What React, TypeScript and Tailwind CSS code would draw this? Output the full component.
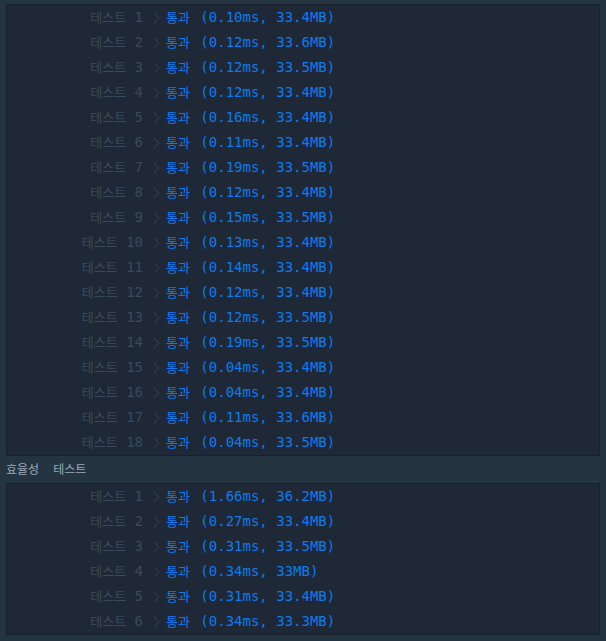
import { FC } from 'react';

type Row = { no: number; time: string; mem: string };

const accuracy: Row[] = [
  { no: 1, time: '0.10ms', mem: '33.4MB' },
  { no: 2, time: '0.12ms', mem: '33.6MB' },
  { no: 3, time: '0.12ms', mem: '33.5MB' },
  { no: 4, time: '0.12ms', mem: '33.4MB' },
  { no: 5, time: '0.16ms', mem: '33.4MB' },
  { no: 6, time: '0.11ms', mem: '33.4MB' },
  { no: 7, time: '0.19ms', mem: '33.5MB' },
  { no: 8, time: '0.12ms', mem: '33.4MB' },
  { no: 9, time: '0.15ms', mem: '33.5MB' },
  { no: 10, time: '0.13ms', mem: '33.4MB' },
  { no: 11, time: '0.14ms', mem: '33.4MB' },
  { no: 12, time: '0.12ms', mem: '33.4MB' },
  { no: 13, time: '0.12ms', mem: '33.5MB' },
  { no: 14, time: '0.19ms', mem: '33.5MB' },
  { no: 15, time: '0.04ms', mem: '33.4MB' },
  { no: 16, time: '0.04ms', mem: '33.4MB' },
  { no: 17, time: '0.11ms', mem: '33.6MB' },
  { no: 18, time: '0.04ms', mem: '33.5MB' },
];

const efficiency: Row[] = [
  { no: 1, time: '1.66ms', mem: '36.2MB' },
  { no: 2, time: '0.27ms', mem: '33.4MB' },
  { no: 3, time: '0.31ms', mem: '33.5MB' },
  { no: 4, time: '0.34ms', mem: '33MB' },
  { no: 5, time: '0.31ms', mem: '33.4MB' },
  { no: 6, time: '0.34ms', mem: '33.3MB' },
];

const Chevron: FC = () => (
  <svg width="7" height="12" viewBox="0 0 7 12" className="ml-[10px] mr-[6px] shrink-0">
    <path d="M1 1l5 5-5 5" fill="none" stroke="#2f3c4a" strokeWidth="1.2" />
  </svg>
);

const ResultTable: FC<{ rows: Row[] }> = ({ rows }) => (
  <div className="mx-[6px] border border-[#172130] bg-[#1e2836]">
    {rows.map((r) => (
      <div key={r.no} className="flex h-[25px] items-center text-[14px] leading-[25px]">
        <span className="w-[136px] shrink-0 text-right text-[#3a4a5b]">
          <span className="text-[13px]">테스트</span> {r.no}
        </span>
        <Chevron />
        <span className="text-[#0a7cf0]">
          <span className="mr-[2px] text-[13px]">통과</span> ({r.time}, {r.mem})
        </span>
      </div>
    ))}
  </div>
);

export default function App() {
  return (
    <div
      className="min-h-[641px] w-[606px] bg-[#253441] pt-[4px]"
      style={{ fontFamily: '"DejaVu Sans Mono", "Noto Sans CJK KR", monospace' }}
    >
      <ResultTable rows={accuracy} />
      <div className="flex h-[27px] items-center gap-[14px] px-[6px] text-[12px] text-[#9aa9b8]">
        <span>효율성</span>
        <span>테스트</span>
      </div>
      <ResultTable rows={efficiency} />
    </div>
  );
}
